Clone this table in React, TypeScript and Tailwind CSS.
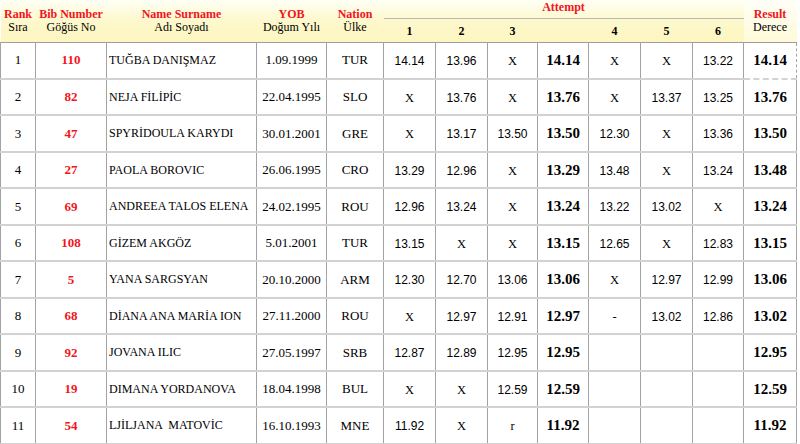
import React from 'react';

type Row = {
  rank: number;
  bib: string;
  name: string;
  yob: string;
  nat: string;
  a: string[]; // attempts 1-3
  best3: string;
  b: string[]; // attempts 4-6
  result: string;
};

const rows: Row[] = [
  { rank: 1, bib: '110', name: 'TUĞBA DANIŞMAZ', yob: '1.09.1999', nat: 'TUR', a: ['14.14', '13.96', 'X'], best3: '14.14', b: ['X', 'X', '13.22'], result: '14.14' },
  { rank: 2, bib: '82', name: 'NEJA FİLİPİC', yob: '22.04.1995', nat: 'SLO', a: ['X', '13.76', 'X'], best3: '13.76', b: ['X', '13.37', '13.25'], result: '13.76' },
  { rank: 3, bib: '47', name: 'SPYRİDOULA KARYDI', yob: '30.01.2001', nat: 'GRE', a: ['X', '13.17', '13.50'], best3: '13.50', b: ['12.30', 'X', '13.36'], result: '13.50' },
  { rank: 4, bib: '27', name: 'PAOLA BOROVIC', yob: '26.06.1995', nat: 'CRO', a: ['13.29', '12.96', 'X'], best3: '13.29', b: ['13.48', 'X', '13.24'], result: '13.48' },
  { rank: 5, bib: '69', name: 'ANDREEA TALOS ELENA', yob: '24.02.1995', nat: 'ROU', a: ['12.96', '13.24', 'X'], best3: '13.24', b: ['13.22', '13.02', 'X'], result: '13.24' },
  { rank: 6, bib: '108', name: 'GİZEM AKGÖZ', yob: '5.01.2001', nat: 'TUR', a: ['13.15', 'X', 'X'], best3: '13.15', b: ['12.65', 'X', '12.83'], result: '13.15' },
  { rank: 7, bib: '5', name: 'YANA SARGSYAN', yob: '20.10.2000', nat: 'ARM', a: ['12.30', '12.70', '13.06'], best3: '13.06', b: ['X', '12.97', '12.99'], result: '13.06' },
  { rank: 8, bib: '68', name: 'DİANA ANA MARİA ION', yob: '27.11.2000', nat: 'ROU', a: ['X', '12.97', '12.91'], best3: '12.97', b: ['-', '13.02', '12.86'], result: '13.02' },
  { rank: 9, bib: '92', name: 'JOVANA ILIC', yob: '27.05.1997', nat: 'SRB', a: ['12.87', '12.89', '12.95'], best3: '12.95', b: ['', '', ''], result: '12.95' },
  { rank: 10, bib: '19', name: 'DIMANA YORDANOVA', yob: '18.04.1998', nat: 'BUL', a: ['X', 'X', '12.59'], best3: '12.59', b: ['', '', ''], result: '12.59' },
  { rank: 11, bib: '54', name: 'LJİLJANA  MATOVİC', yob: '16.10.1993', nat: 'MNE', a: ['11.92', 'X', 'r'], best3: '11.92', b: ['', '', ''], result: '11.92' },
];

const serif = "font-['Liberation_Serif',serif]";
const sans = "font-['Liberation_Sans',sans-serif]";
const cell = 'h-[36.5px] p-0 border-x border-x-[#a3a3a3] border-b-2 border-b-[#d2d2d2] text-center align-middle';

const Mark: React.FC<{ v: string }> = ({ v }) => {
  const isNum = /\d/.test(v);
  return <span className={isNum ? `${sans} text-[12px]` : `${serif} text-[12.5px]`}>{v}</span>;
};

const App: React.FC = () => {
  return (
    <div className="w-[800px] h-[444px] overflow-hidden bg-white text-black">
      <table className={`table-fixed border-collapse w-[796px] ${serif}`}>
        <colgroup>
          <col className="w-[35px]" />
          <col className="w-[71px]" />
          <col className="w-[150px]" />
          <col className="w-[70px]" />
          <col className="w-[57px]" />
          <col className="w-[52px]" />
          <col className="w-[52px]" />
          <col className="w-[50px]" />
          <col className="w-[51px]" />
          <col className="w-[52px]" />
          <col className="w-[52px]" />
          <col className="w-[51px]" />
          <col className="w-[53px]" />
        </colgroup>
        <thead className="bg-gradient-to-b from-[#fffff4] via-[#fdf8cc] to-[#fdf6c0] text-[12px] leading-[13px]">
          <tr className="h-[18px]">
            {[
              ['Rank', 'Sıra'],
              ['Bib Number', 'Göğüs No'],
              ['Name Surname', 'Adı Soyadı'],
              ['YOB', 'Doğum Yılı'],
              ['Nation', 'Ülke'],
            ].map(([en, tr]) => (
              <th key={en} rowSpan={2} className="p-0 font-normal align-middle text-center">
                <div className="font-bold text-[#f2141c]">{en}</div>
                <div>{tr}</div>
              </th>
            ))}
            <th colSpan={7} className="p-0 pb-[3px] font-bold text-[#f2141c] text-center border-b border-[#b8b8b8] align-middle">
              Attempt
            </th>
            <th rowSpan={2} className="p-0 font-normal align-middle text-center bg-gradient-to-b from-[#fffff8] to-[#fefad8]">
              <div className="font-bold text-[#f2141c]">Result</div>
              <div>Derece</div>
            </th>
          </tr>
          <tr className="h-[24px] text-[12px] font-bold">
            <th className="p-0 pt-[3px]">1</th>
            <th className="p-0 pt-[3px]">2</th>
            <th className="p-0 pt-[3px]">3</th>
            <th className="p-0" />
            <th className="p-0 pt-[3px]">4</th>
            <th className="p-0 pt-[3px]">5</th>
            <th className="p-0 pt-[3px]">6</th>
          </tr>
        </thead>
        <tbody className="border-t border-[#9c9c9c]">
          {rows.map((r, i) => (
            <tr key={r.rank}>
              <td className={`${cell} text-[13px]`}>{r.rank}</td>
              <td className={`${cell} text-[13px] font-bold text-[#f2141c]`}>{r.bib}</td>
              <td className={`${cell} !text-left pl-[2px] text-[12px] whitespace-pre`}>{r.name}</td>
              <td className={`${cell} text-[13px]`}>{r.yob}</td>
              <td className={`${cell} text-[13px]`}>{r.nat}</td>
              {r.a.map((v, k) => (
                <td key={k} className={cell}>
                  <Mark v={v} />
                </td>
              ))}
              <td className={`${cell} text-[15px] font-bold`}>{r.best3}</td>
              {r.b.map((v, k) => (
                <td key={k} className={cell}>
                  <Mark v={v} />
                </td>
              ))}
              <td className={`${cell} text-[15px] font-bold ${i === 0 ? 'border-t border-t-[#333] border-dashed' : ''}`}>{r.result}</td>
            </tr>
          ))}
        </tbody>
      </table>
    </div>
  );
};

export default App;
